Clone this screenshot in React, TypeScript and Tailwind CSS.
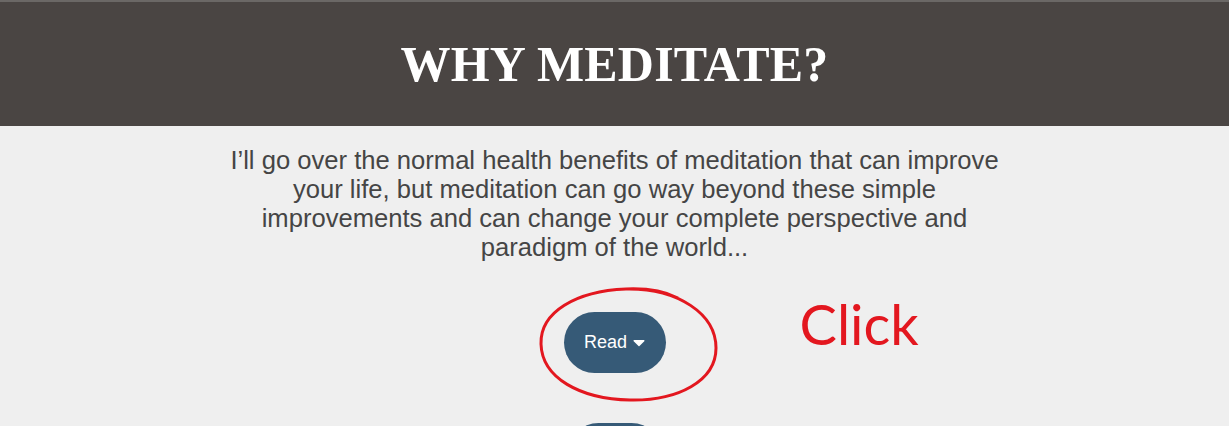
import React from "react";

function Caret() {
  return (
    <svg width="12" height="8" viewBox="0 0 12 8" className="ml-[6px]">
      <path d="M1.2 1h9.6c.7 0 1 .8.5 1.3L6.5 7c-.3.3-.7.3-1 0L.7 2.3C.2 1.8.5 1 1.2 1z" fill="#ffffff" />
    </svg>
  );
}

export default function App() {
  return (
    <div className="min-h-screen bg-[#efefef] overflow-hidden">
      <div className="h-[2px] bg-[#6b6866]" />
      <header className="h-[124px] bg-[#4a4543] flex items-center justify-center">
        <h1
          className="text-white font-bold text-[50px] leading-none tracking-[0.2px] uppercase"
          style={{ fontFamily: '"Liberation Serif", "Times New Roman", serif' }}
        >
          Why Meditate?
        </h1>
      </header>
      <main className="flex flex-col items-center pt-[20px]">
        <p
          className="w-[786px] text-center text-[25.6px] leading-[29px] text-[#454545]"
          style={{ fontFamily: '"Liberation Sans", Arial, sans-serif' }}
        >
          I’ll go over the normal health benefits of meditation that can improve your life, but meditation can go way beyond these simple improvements and can change your complete perspective and paradigm of the world...
        </p>
        <div className="relative mt-[50px]">
          <button
            className="h-[61px] w-[102px] rounded-full bg-[#365a77] text-white text-[18px] flex items-center justify-center"
            style={{ fontFamily: '"Liberation Sans", Arial, sans-serif' }}
          >
            Read
            <Caret />
          </button>
          <svg
            className="absolute left-[-26px] top-[-26px] pointer-events-none"
            width="182"
            height="118"
            viewBox="0 0 182 118"
          >
            <path
              d="M88 3 C140 2 178 28 178 62 C178 95 140 115 92 114 C42 113 4 92 3 58 C2 26 38 5 88 3 C110 2 128 6 140 12"
              fill="none"
              stroke="#e3171f"
              strokeWidth="3"
            />
          </svg>
          <span
            className="absolute left-[236px] top-[-16px] text-[56px] leading-none text-[#e3171f] whitespace-nowrap"
            style={{ fontFamily: 'Lato, "Open Sans", sans-serif' }}
          >
            Click
          </span>
        </div>
        <button className="mt-[50px] h-[61px] w-[94px] rounded-full bg-[#365a77]" />
      </main>
    </div>
  );
}
